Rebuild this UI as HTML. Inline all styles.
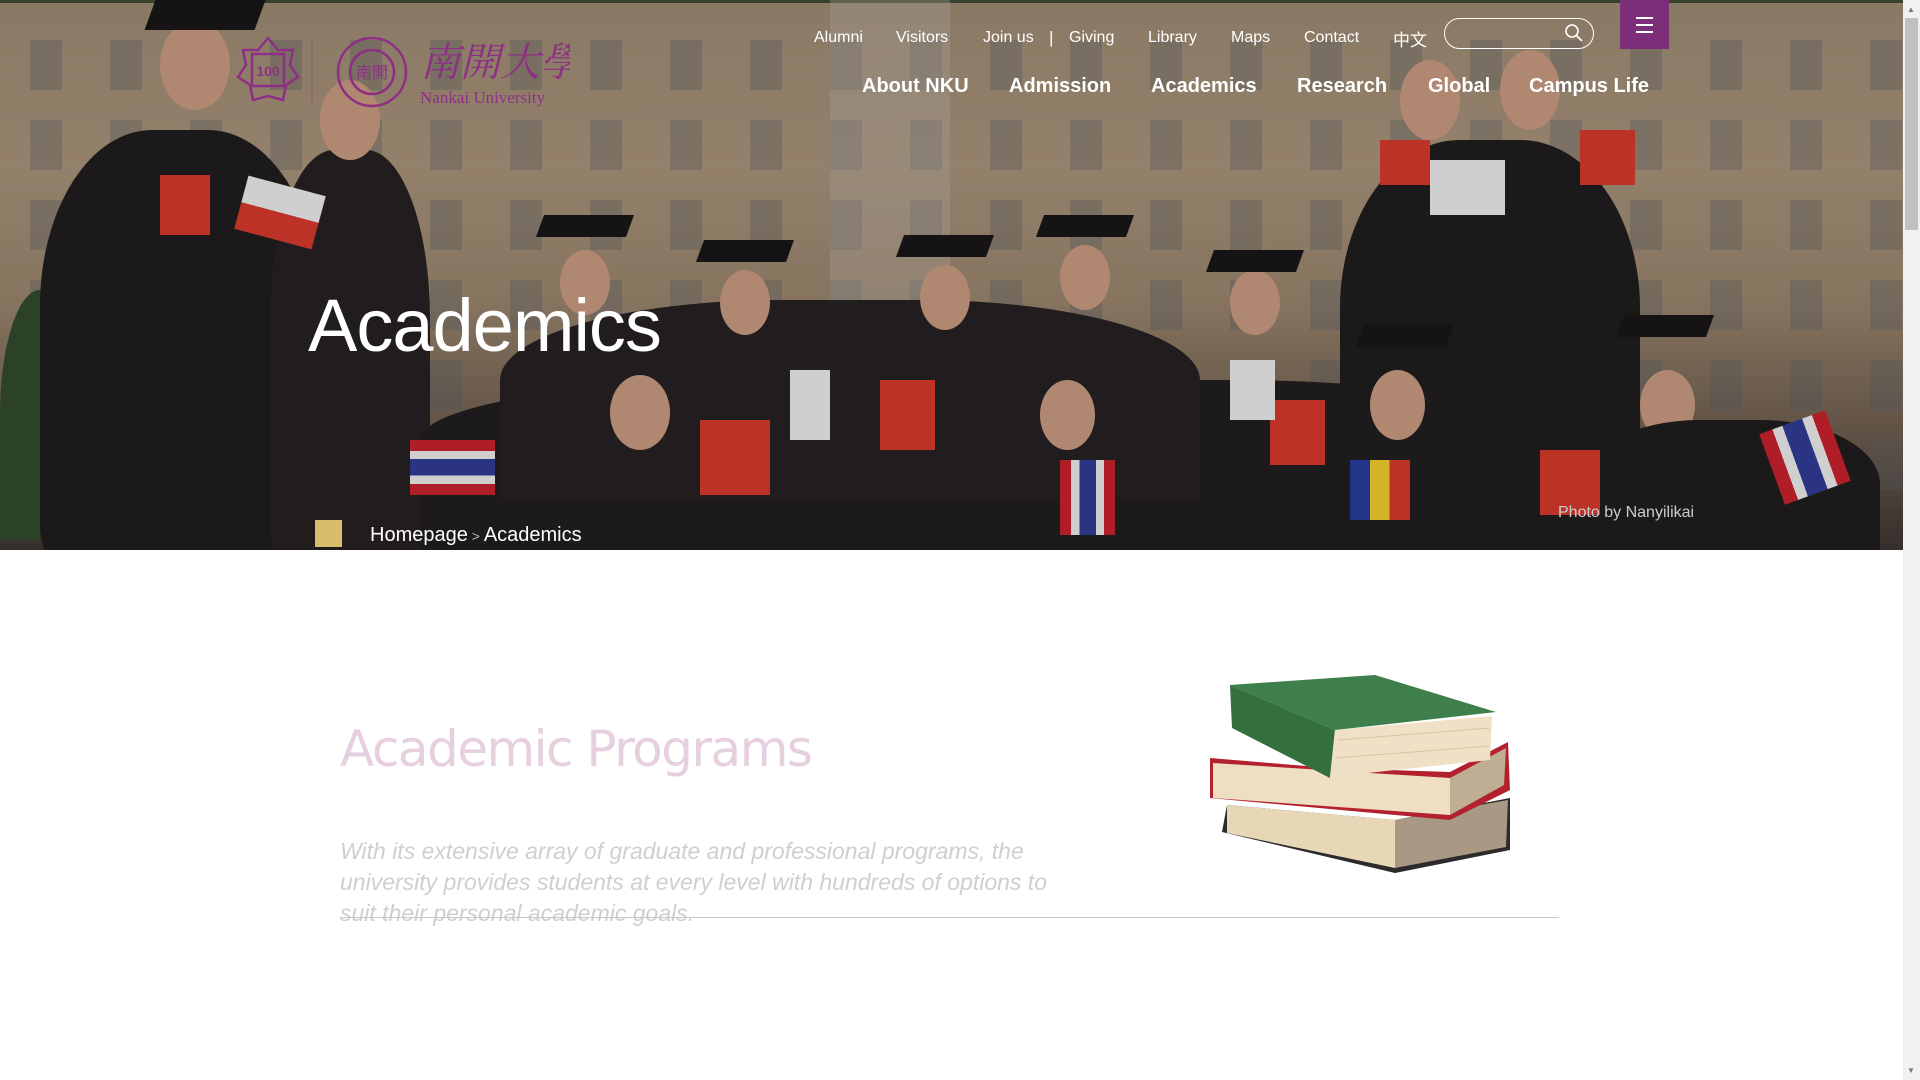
<!DOCTYPE html>
<html><head><meta charset="utf-8">
<style>
*{margin:0;padding:0;box-sizing:border-box}
html,body{width:1920px;height:1080px;overflow:hidden;background:#fff;font-family:"Liberation Sans","Noto Sans CJK SC",sans-serif}
.hero{position:absolute;left:0;top:0;width:1903px;height:550px;overflow:hidden;
background:linear-gradient(180deg,#9c8a72 0%,#a8937a 30%,#98846c 55%,#6a5a4c 80%,#3a3330 100%)}
.win{position:absolute;left:0;top:40px;width:1903px;height:460px;
background-image:linear-gradient(90deg,transparent 0 30px,rgba(90,95,100,.7) 30px 62px,transparent 62px 80px);
background-size:80px 100%;opacity:.5;
-webkit-mask:repeating-linear-gradient(180deg,#000 0 50px,transparent 50px 80px)}
.fig{position:absolute;background:#1c1a1b;border-radius:40% 40% 10% 10%}
.face{position:absolute;background:#c99a80;border-radius:50%}
.cap{position:absolute;background:#141313;transform:skewX(-20deg)}
.flag{position:absolute;background:#d8372a}
.top a{position:absolute;top:29px;color:#fff;font-size:16px;text-decoration:none}
.nav a{position:absolute;top:75px;color:#fff;font-size:20px;font-weight:bold;text-decoration:none}
.t{position:absolute;color:#fff}
</style></head><body>
<div class="hero">
<div class="win"></div>
<div style="position:absolute;left:0;top:0;width:1903px;height:3px;background:#3b4a30"></div>
<div style="position:absolute;left:830px;top:0;width:120px;height:520px;background:rgba(190,180,170,.35)"></div>
<div style="position:absolute;left:0;top:620px;width:80px;height:250px;background:#2f4a2c;border-radius:50% 50% 0 0;transform:translateY(-330px)"></div>
<div class="fig" style="left:40px;top:130px;width:280px;height:440px"></div>
<div class="face" style="left:160px;top:20px;width:70px;height:90px"></div>
<div class="cap" style="left:150px;top:0;width:110px;height:30px"></div>
<div class="fig" style="left:270px;top:150px;width:160px;height:420px;background:#221f20"></div>
<div class="face" style="left:320px;top:80px;width:60px;height:80px"></div>
<div class="fig" style="left:1340px;top:140px;width:300px;height:420px"></div>
<div class="face" style="left:1400px;top:60px;width:60px;height:80px"></div>
<div class="face" style="left:1500px;top:50px;width:60px;height:80px"></div>
<div class="fig" style="left:420px;top:380px;width:1150px;height:200px;background:#1d1b1c;border-radius:30% 30% 0 0"></div>
<div class="fig" style="left:500px;top:300px;width:700px;height:200px;background:#221f20;border-radius:40% 40% 0 0"></div>
<div class="face" style="left:560px;top:250px;width:50px;height:65px"></div>
<div class="face" style="left:720px;top:270px;width:50px;height:65px"></div>
<div class="face" style="left:920px;top:265px;width:50px;height:65px"></div>
<div class="face" style="left:1060px;top:245px;width:50px;height:65px"></div>
<div class="face" style="left:1230px;top:270px;width:50px;height:65px"></div>
<div class="face" style="left:610px;top:375px;width:60px;height:75px"></div>
<div class="face" style="left:1040px;top:380px;width:55px;height:70px"></div>
<div class="face" style="left:1370px;top:370px;width:55px;height:70px"></div>
<div class="face" style="left:1640px;top:370px;width:55px;height:70px"></div>
<div class="fig" style="left:1580px;top:420px;width:300px;height:160px"></div>
<div class="cap" style="left:540px;top:215px;width:90px;height:22px"></div>
<div class="cap" style="left:700px;top:240px;width:90px;height:22px"></div>
<div class="cap" style="left:900px;top:235px;width:90px;height:22px"></div>
<div class="cap" style="left:1040px;top:215px;width:90px;height:22px"></div>
<div class="cap" style="left:1210px;top:250px;width:90px;height:22px"></div>
<div class="cap" style="left:1620px;top:315px;width:90px;height:22px"></div>
<div class="cap" style="left:1360px;top:325px;width:90px;height:22px"></div>
<div class="flag" style="left:160px;top:175px;width:50px;height:60px"></div>
<div class="flag" style="left:240px;top:185px;width:80px;height:55px;background:linear-gradient(#eee 50%,#d8372a 50%);transform:rotate(15deg)"></div>
<div class="flag" style="left:700px;top:420px;width:70px;height:75px"></div>
<div class="flag" style="left:880px;top:380px;width:55px;height:70px"></div>
<div class="flag" style="left:1270px;top:400px;width:55px;height:65px"></div>
<div class="flag" style="left:1580px;top:130px;width:55px;height:55px"></div>
<div class="flag" style="left:1540px;top:450px;width:60px;height:65px"></div>
<div class="flag" style="left:1380px;top:140px;width:50px;height:45px"></div>
<div class="flag" style="left:410px;top:440px;width:85px;height:55px;background:linear-gradient(#c8202a 20%,#eee 20% 35%,#2d3a96 35% 65%,#eee 65% 80%,#c8202a 80%)"></div>
<div class="flag" style="left:1060px;top:460px;width:55px;height:75px;background:linear-gradient(90deg,#c8202a 20%,#eee 20% 35%,#2d3a96 35% 65%,#eee 65% 80%,#c8202a 80%)"></div>
<div class="flag" style="left:1770px;top:420px;width:70px;height:75px;background:linear-gradient(90deg,#c8202a 20%,#eee 20% 35%,#2d3a96 35% 65%,#eee 65% 80%,#c8202a 80%);transform:rotate(-20deg)"></div>
<div class="flag" style="left:1430px;top:160px;width:75px;height:55px;background:#eee"></div>
<div class="flag" style="left:1350px;top:460px;width:60px;height:60px;background:linear-gradient(90deg,#253a9a 33%,#f0d02a 33% 66%,#d8372a 66%)"></div>
<div class="flag" style="left:790px;top:370px;width:40px;height:70px;background:#eee"></div>
<div class="flag" style="left:1230px;top:360px;width:45px;height:60px;background:#eee"></div>
<div style="position:absolute;left:0;top:0;width:1903px;height:550px;background:rgba(30,20,20,.14)"></div>

<svg style="position:absolute;left:230px;top:30px" width="340" height="80" viewBox="0 0 340 80">
<g fill="none" stroke="#8e2f86" stroke-width="2.5">
<polygon points="38,8 48,20 63,20 60,35 68,47 56,55 53,70 38,66 23,70 20,55 8,47 16,35 13,20 28,20"/>
<rect x="22" y="24" width="32" height="32"/>
<line x1="82" y1="10" x2="82" y2="75" stroke-width="1" stroke="#7a5a6a"/>
<circle cx="142" cy="42" r="34"/><circle cx="142" cy="42" r="22"/>
</g>
<text x="38" y="46" font-size="14" fill="#8e2f86" text-anchor="middle" font-weight="bold">100</text>
<text x="142" y="48" font-size="16" fill="#8e2f86" text-anchor="middle">南開</text>
<text x="190" y="46" font-size="40" fill="#8e2f86" font-family="Noto Serif CJK SC,serif" font-style="italic">南開大學</text>
<text x="190" y="73" font-size="17" fill="#8e2f86" font-family="Liberation Serif,serif">Nankai University</text>
</svg>

<div class="top">
<a style="left:814px">Alumni</a><a style="left:896px">Visitors</a><a style="left:983px">Join us</a>
<span class="t" style="left:1049px;top:28px;font-size:17px">|</span>
<a style="left:1069px">Giving</a><a style="left:1148px">Library</a><a style="left:1231px">Maps</a><a style="left:1304px">Contact</a><a style="left:1393px;top:26px;font-size:17px">中文</a>
</div>
<div style="position:absolute;left:1444px;top:18px;width:150px;height:31px;border:1.5px solid #fff;border-radius:16px"></div>
<svg style="position:absolute;left:1564px;top:23px" width="20" height="20" viewBox="0 0 20 20"><circle cx="8" cy="8" r="6" stroke="#fff" stroke-width="1.6" fill="none"/><line x1="12.5" y1="12.5" x2="18" y2="18" stroke="#fff" stroke-width="1.6"/></svg>
<div style="position:absolute;left:1620px;top:0;width:49px;height:49px;background:#7c2f78"></div>
<div style="position:absolute;left:1636px;top:17px;width:17px;height:2px;background:#fff;box-shadow:0 7px 0 #fff,0 14px 0 #fff"></div>

<div class="nav">
<a style="left:862px">About NKU</a><a style="left:1009px">Admission</a><a style="left:1151px">Academics</a><a style="left:1297px">Research</a><a style="left:1428px">Global</a><a style="left:1529px">Campus Life</a>
</div>

<div class="t" style="left:308px;top:283px;font-size:74px;letter-spacing:-1px">Academics</div>
<div style="position:absolute;left:315px;top:520px;width:27px;height:27px;background:#d8bd6c"></div>
<div class="t" style="left:370px;top:524px;font-size:20px">Homepage<span style="color:#bbb;font-size:14px"> &gt; </span>Academics</div>
<div class="t" style="left:1558px;top:504px;font-size:16px;color:#ccc">Photo by Nanyilikai</div>
</div>

<div style="position:absolute;left:1903px;top:0;width:17px;height:1080px;background:#f1f1f1"></div>
<div style="position:absolute;left:1905px;top:18px;width:13px;height:212px;background:#c1c1c1"></div>
<div style="position:absolute;left:1907px;top:5px;font-size:8px;color:#777">▲</div>
<div style="position:absolute;left:1907px;top:1066px;font-size:8px;color:#777">▼</div>

<div style="position:absolute;left:340px;top:720px;font-size:50px;color:#e6d0df;font-family:'DejaVu Sans',sans-serif;letter-spacing:-1.5px">Academic Programs</div>
<div style="position:absolute;left:340px;top:836px;width:745px;font-size:23px;line-height:31px;color:#cfcfcf;font-style:italic">With its extensive array of graduate and professional programs, the university provides students at every level with hundreds of options to suit their personal academic goals.</div>
<div style="position:absolute;left:340px;top:917px;width:1219px;height:1px;background:#c8c8c8"></div>

<svg style="position:absolute;left:1180px;top:640px" width="380" height="260" viewBox="0 0 380 260">
<polygon points="42,192 215,233 330,210 330,158 215,180 47,165" fill="#2b2b2b"/>
<polygon points="47,165 215,180 215,228 47,193" fill="#e8d7b7"/>
<polygon points="215,180 328,160 326,207 215,228" fill="#a99883"/>
<polygon points="30,118 150,128 270,132 328,102 330,150 270,180 30,158" fill="#b3202e"/>
<polygon points="33,123 270,138 270,175 33,158" fill="#efdfc2"/>
<polygon points="270,138 326,108 324,145 270,175" fill="#bfae93"/>
<polygon points="50,45 195,35 316,72 155,90" fill="#3e7f4c"/>
<polygon points="50,45 155,90 150,138 52,88" fill="#34703f"/>
<polygon points="155,90 312,76 310,120 150,137" fill="#f0e1c6"/>
<line x1="158" y1="100" x2="310" y2="88" stroke="#d6c3a3"/>
<line x1="156" y1="118" x2="310" y2="106" stroke="#d6c3a3"/>
</svg>
</body></html>
